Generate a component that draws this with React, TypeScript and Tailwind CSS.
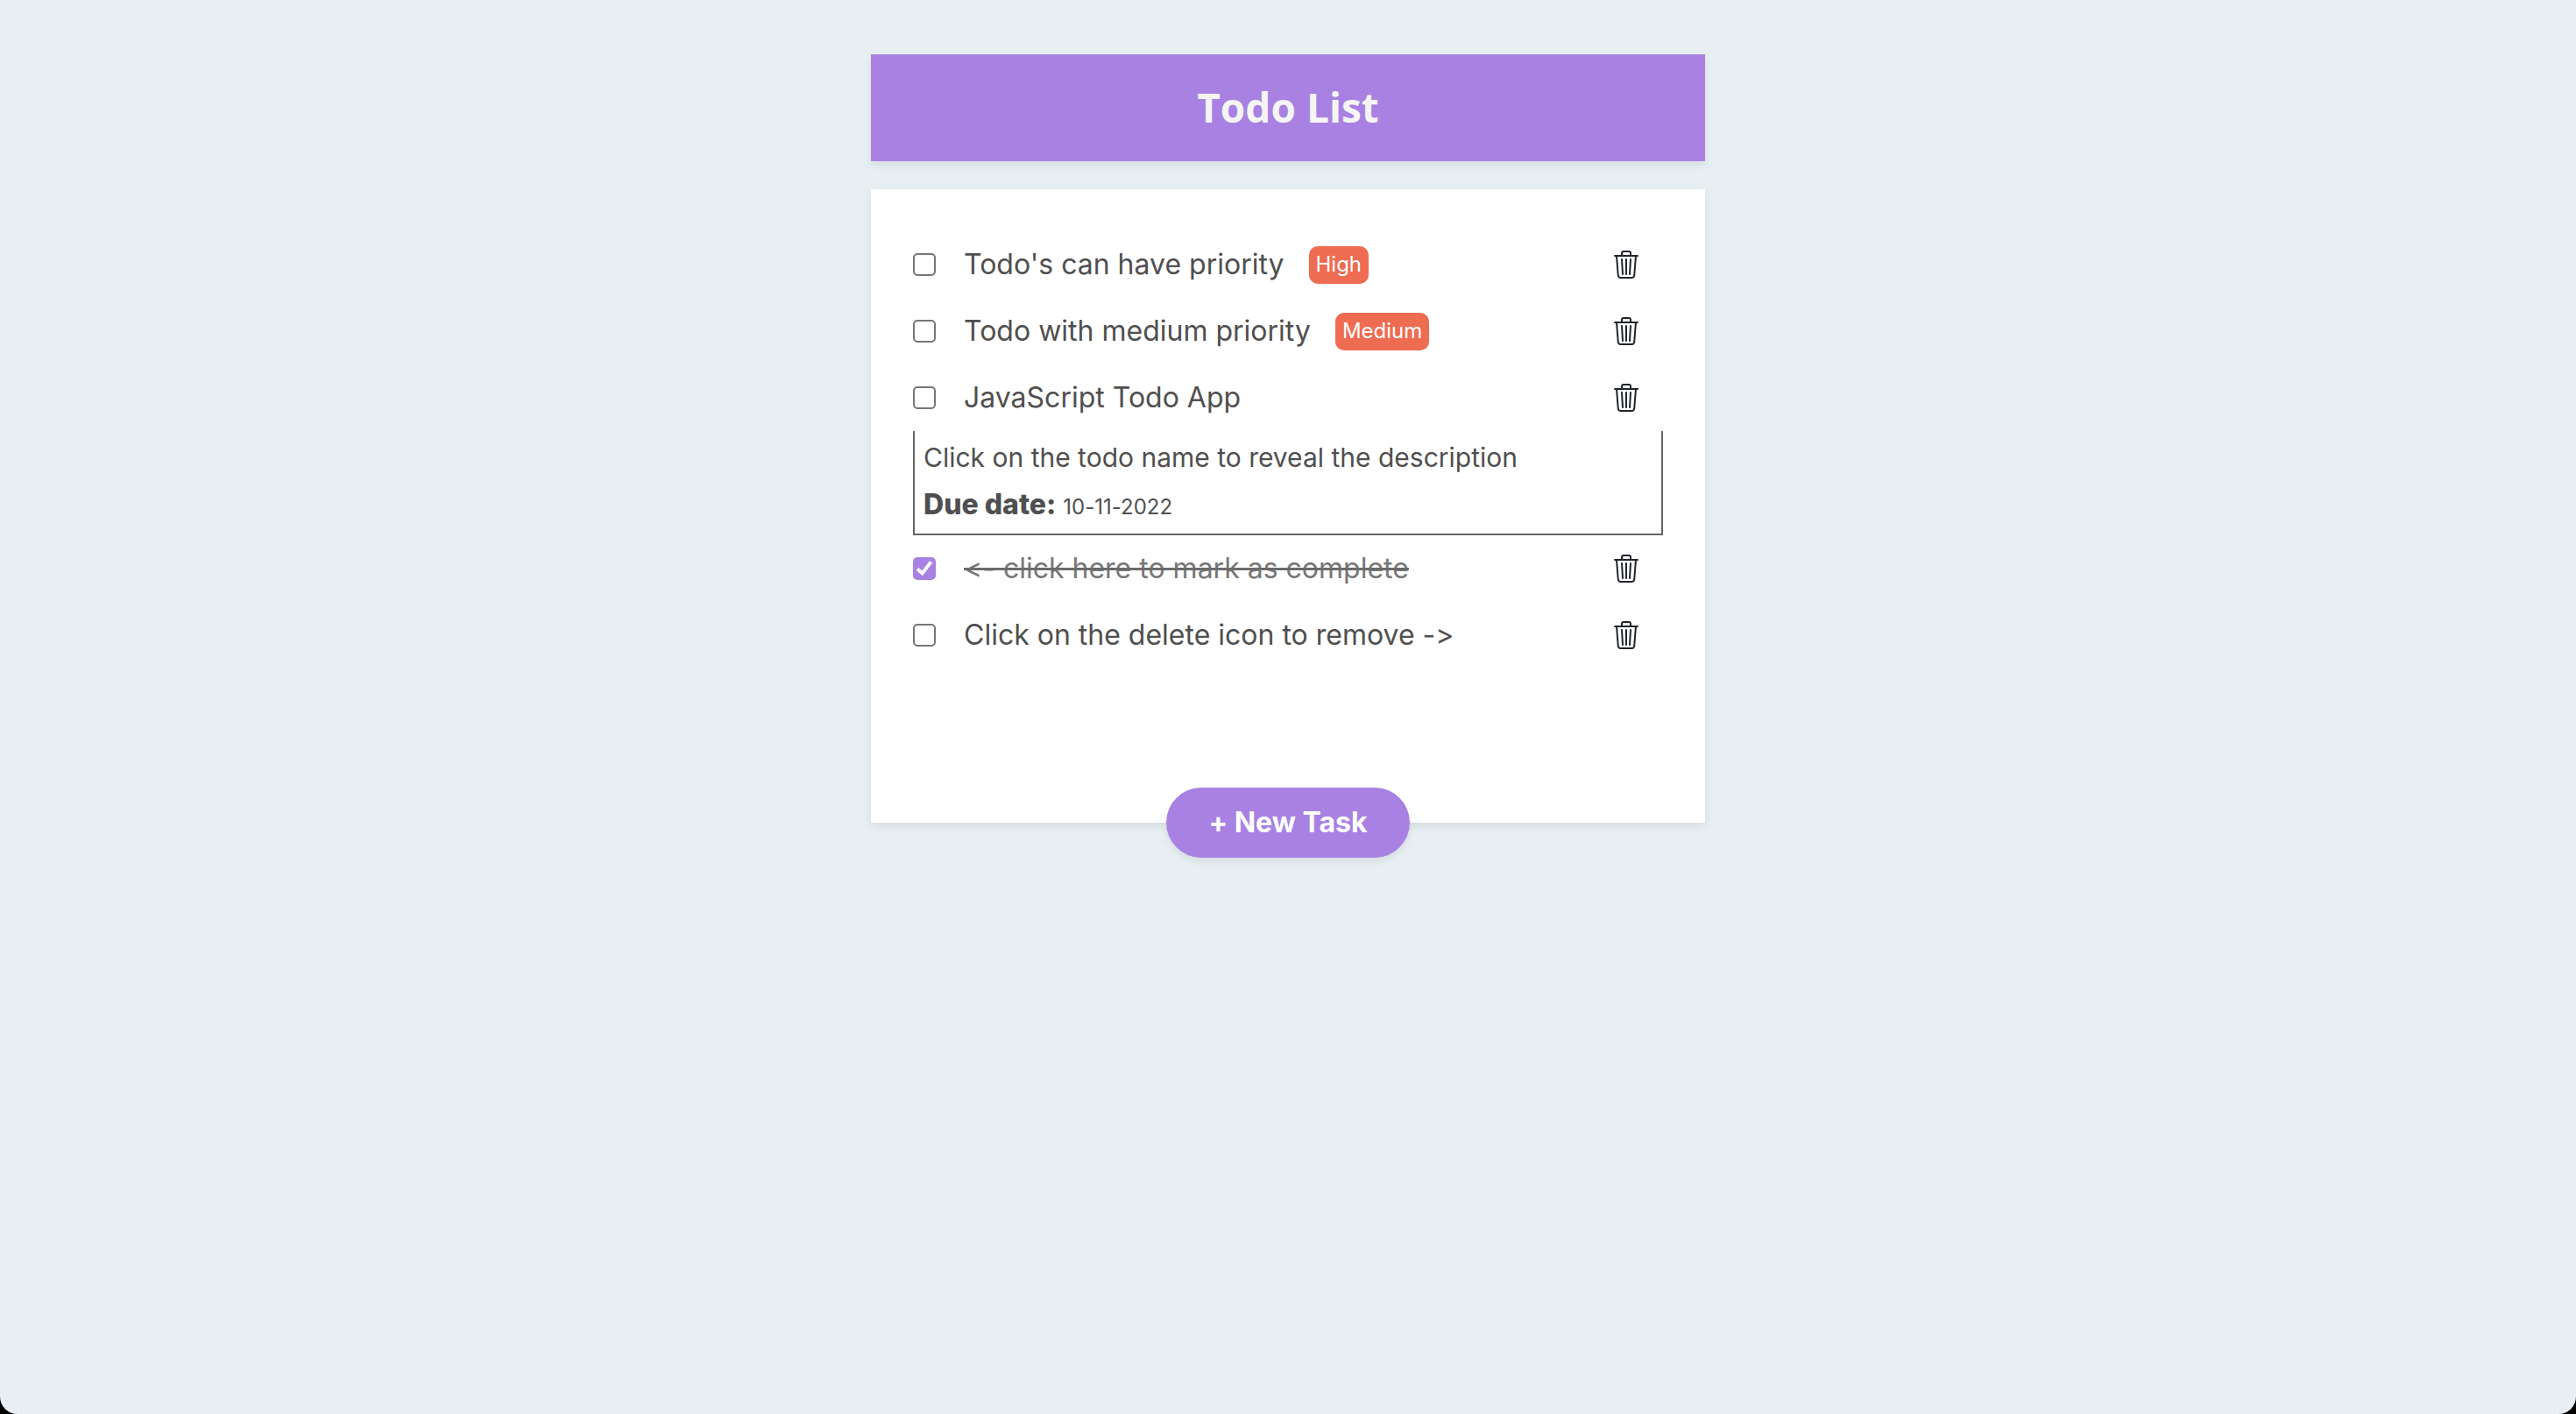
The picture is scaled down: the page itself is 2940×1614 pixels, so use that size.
import { useState } from "react";
import { BsTrash3 } from "react-icons/bs";

type Todo = {
  id: string;
  name: string;
  done?: boolean;
  priority?: string;
  description?: string;
  due?: string;
};

const initialTodos: Todo[] = [
  { id: "priority", name: "Todo's can have priority", priority: "High" },
  { id: "medium", name: "Todo with medium priority", priority: "Medium" },
  {
    id: "javascript",
    name: "JavaScript Todo App",
    description: "Click on the todo name to reveal the description",
    due: "10-11-2022",
  },
  { id: "complete", name: "<- click here to mark as complete", done: true },
  { id: "remove", name: "Click on the delete icon to remove ->" },
];

function TodoItem({ todo, onToggle, onDelete }: { todo: Todo; onToggle: () => void; onDelete: () => void }) {
  return (
    <li>
      <div className="flex h-[76px] items-center pr-[26px]">
        <span className="relative mr-8 flex size-[26px] shrink-0">
          <input
            id={todo.id}
            type="checkbox"
            checked={!!todo.done}
            onChange={onToggle}
            className="size-[26px] appearance-none rounded-[5px] border-2 border-[#767676] bg-white checked:border-[#a881e3] checked:bg-[#a881e3]"
          />
          {todo.done && (
            <svg viewBox="0 0 26 26" className="pointer-events-none absolute inset-0 size-[26px]" fill="none" stroke="white" strokeWidth="4">
              <path d="M5 13.4 10.6 18.4 20.6 5.4" />
            </svg>
          )}
        </span>
        <label
          htmlFor={todo.id}
          className={
            todo.done
              ? "text-[32px] leading-10 text-[#777777] line-through decoration-[#6b6b6b] decoration-[3px]"
              : "text-[32px] leading-10 text-[#4f4f4f]"
          }
        >
          {todo.name}
        </label>
        {todo.priority && (
          <span className="ml-7 flex h-[43px] items-center rounded-[10px] bg-[#ee6c52] px-2 text-2xl text-white">{todo.priority}</span>
        )}
        <button type="button" aria-label={`Delete ${todo.name}`} onClick={onDelete} className="ml-auto text-[#212529]">
          <BsTrash3 className="size-8" />
        </button>
      </div>
      {todo.description && (
        <div className="border-2 border-t-0 border-[#666666] px-[10px] pt-2 pb-[13px] text-[#4f4f4f]">
          <p className="text-[30px] leading-[44px]">{todo.description}</p>
          <p className="mt-3 flex h-10 items-baseline gap-2 text-2xl leading-10">
            <strong className="text-[32px] leading-10 font-extrabold">Due date:</strong>
            <span>{todo.due}</span>
          </p>
        </div>
      )}
    </li>
  );
}

export default function App() {
  const [todos, setTodos] = useState(initialTodos);
  return (
    <div className="bg-black">
      <div className="min-h-screen rounded-b-[20px] bg-[#e8eff3] px-8 pt-[62px] font-['Inter',sans-serif] [font-variant-ligatures:none]">
        <main className="mx-auto w-full max-w-[952px]">
          <header className="mb-8 bg-[#a881e3] pt-6 pb-[26px] text-center shadow-[0_4px_10px_rgba(0,0,0,0.08)]">
            <h1 className="font-['Open_Sans',sans-serif] text-[46px] leading-[72px] font-bold text-[#f5f5f5]">Todo List</h1>
          </header>
          <section className="flex flex-col bg-white px-12 pt-12 shadow-[0_4px_10px_rgba(0,0,0,0.08)]">
            <ul className="pb-[136px]">
              {todos.map((todo) => (
                <TodoItem
                  key={todo.id}
                  todo={todo}
                  onToggle={() => setTodos(todos.map((t) => (t.id === todo.id ? { ...t, done: !t.done } : t)))}
                  onDelete={() => setTodos(todos.filter((t) => t.id !== todo.id))}
                />
              ))}
            </ul>
            <div className="-mb-10 flex justify-center">
              <button type="button" className="h-20 rounded-full bg-[#a881e3] px-12 text-[32px] font-bold text-white shadow-[0_4px_10px_rgba(0,0,0,0.08)]">
                + New Task
              </button>
            </div>
          </section>
        </main>
      </div>
    </div>
  );
}
